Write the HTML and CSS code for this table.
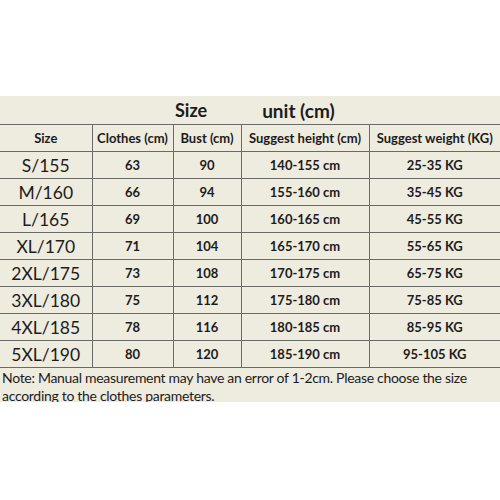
FILE: index.html
```html
<!DOCTYPE html>
<html>
<head>
<meta charset="utf-8">
<link rel="stylesheet" href="styles.css">
</head>
<body>
<div class="sheet">
  <div class="title"><span class="t1">Size</span><span class="t2">unit (cm)</span></div>
  <table class="chart">
    <colgroup>
      <col class="c1"><col class="c2"><col class="c3"><col class="c4"><col class="c5">
    </colgroup>
    <tr class="head"><th>Size</th><th>Clothes (cm)</th><th>Bust (cm)</th><th>Suggest height (cm)</th><th>Suggest weight (KG)</th></tr>
    <tr><td class="sz">S/155</td><td>63</td><td>90</td><td>140-155 cm</td><td>25-35 KG</td></tr>
    <tr><td class="sz">M/160</td><td>66</td><td>94</td><td>155-160 cm</td><td>35-45 KG</td></tr>
    <tr><td class="sz">L/165</td><td>69</td><td>100</td><td>160-165 cm</td><td>45-55 KG</td></tr>
    <tr><td class="sz">XL/170</td><td>71</td><td>104</td><td>165-170 cm</td><td>55-65 KG</td></tr>
    <tr><td class="sz">2XL/175</td><td>73</td><td>108</td><td>170-175 cm</td><td>65-75 KG</td></tr>
    <tr><td class="sz">3XL/180</td><td>75</td><td>112</td><td>175-180 cm</td><td>75-85 KG</td></tr>
    <tr><td class="sz">4XL/185</td><td>78</td><td>116</td><td>180-185 cm</td><td>85-95 KG</td></tr>
    <tr><td class="sz">5XL/190</td><td>80</td><td>120</td><td>185-190 cm</td><td>95-105 KG</td></tr>
  </table>
  <p class="note">Note: Manual measurement may have an error of 1-2cm. Please choose the size according to the clothes parameters.</p>
</div>
</body>
</html>
```
FILE: styles.css
```css
html, body {
  margin: 0;
  padding: 0;
  background: #ffffff;
}
body {
  font-family: Lato, "Open Sans", sans-serif;
  color: #1c1c1c;
}
.sheet {
  margin-top: 96px;
  width: 500px;
  height: 306px;
  background: #eeebdf;
}
.title {
  height: 28px;
  display: flex;
  align-items: center;
  font-weight: bold;
  font-size: 18px;
}
.t1 { margin-left: 175px; }
.t2 { margin-left: 55px; font-size: 19px; }
.chart {
  width: 500px;
  border-collapse: collapse;
  table-layout: fixed;
}
.c1 { width: 92px; }
.c2 { width: 81px; }
.c3 { width: 68px; }
.c4 { width: 128px; }
.c5 { width: 131px; }
.chart th, .chart td {
  border: 1px solid #6a6a66;
  text-align: center;
  padding: 0;
  height: 26px;
  font-size: 13px;
  font-weight: bold;
}
.chart tr > :first-child { border-left: none; }
.chart tr > :last-child { border-right: none; }
.chart .sz {
  font-weight: normal;
  font-size: 17.5px;
}
.note {
  margin: 0;
  padding: 1px 0 0 2px;
  font-size: 14px;
  letter-spacing: -0.3px;
  line-height: 18px;
}
```
